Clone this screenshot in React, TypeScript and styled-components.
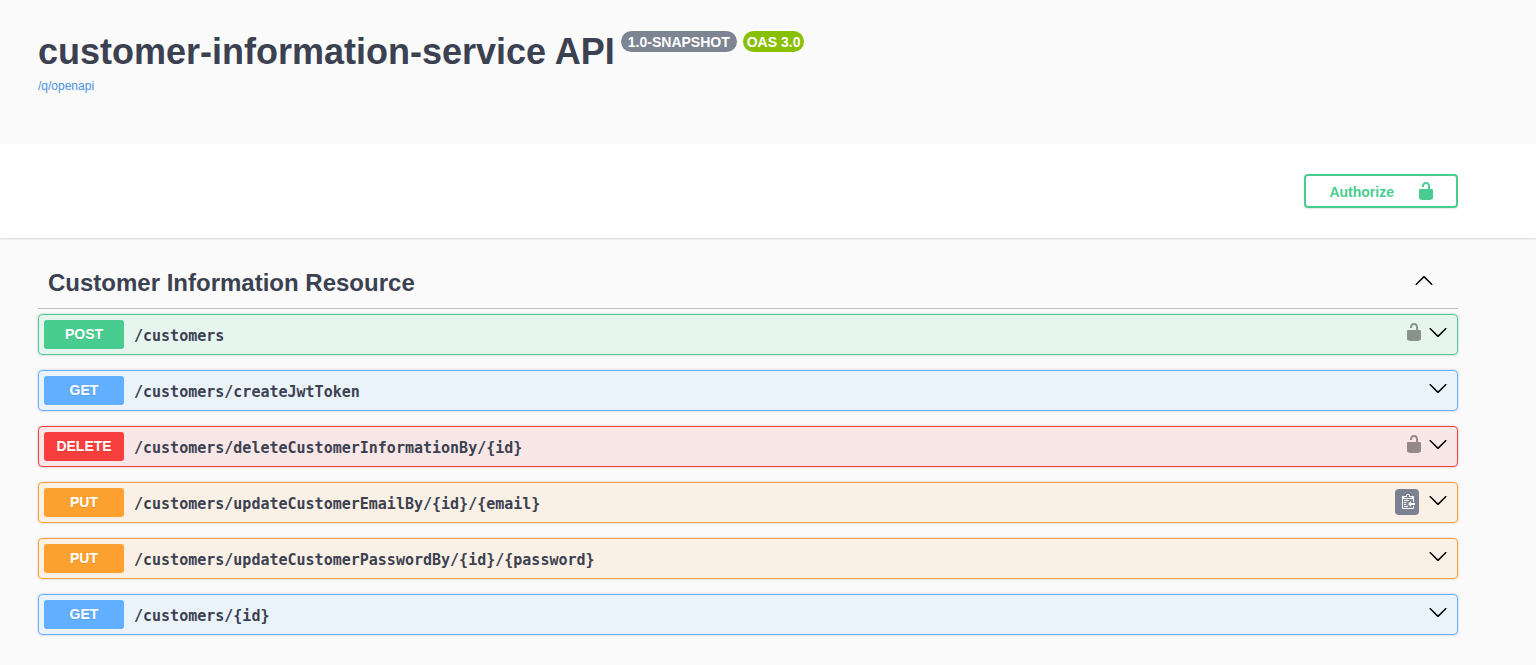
import React from "react";
import styled, { createGlobalStyle } from "styled-components";

const sans = `"Liberation Sans", Arial, sans-serif`;
const mono = `"DejaVu Sans Mono", Consolas, monospace`;
const ink = "#3b4151";

type Method = "POST" | "GET" | "DELETE" | "PUT";

const palette: Record<Method, { solid: string; tint: string }> = {
  POST: { solid: "#49cc90", tint: "rgba(73, 204, 144, 0.1)" },
  GET: { solid: "#61affe", tint: "rgba(97, 175, 254, 0.1)" },
  DELETE: { solid: "#f93e3e", tint: "rgba(249, 62, 62, 0.1)" },
  PUT: { solid: "#fca130", tint: "rgba(252, 161, 48, 0.1)" },
};

interface Operation {
  method: Method;
  path: string;
  secured?: boolean;
  copyable?: boolean;
}

const operations: Operation[] = [
  { method: "POST", path: "/customers", secured: true },
  { method: "GET", path: "/customers/createJwtToken" },
  { method: "DELETE", path: "/customers/deleteCustomerInformationBy/{id}", secured: true },
  { method: "PUT", path: "/customers/updateCustomerEmailBy/{id}/{email}", copyable: true },
  { method: "PUT", path: "/customers/updateCustomerPasswordBy/{id}/{password}" },
  { method: "GET", path: "/customers/{id}" },
];

const GlobalStyle = createGlobalStyle`
  *, *::before, *::after { box-sizing: border-box; }
  body {
    margin: 0;
    background: #fafafa;
    color: ${ink};
    font-family: ${sans};
  }
  button {
    margin: 0;
    padding: 0;
    border: 0;
    background: none;
    color: inherit;
    font-family: inherit;
    cursor: pointer;
  }
  svg { display: block; }
`;

const Page = styled.div`
  min-height: 100vh;
`;

const Band = styled.div`
  padding-right: 40px;
`;

const Wrapper = styled.div`
  max-width: 1460px;
  margin: 0 auto;
  padding: 0 20px;
`;

const Info = styled.header`
  padding: 30px 0 50px;
`;

const TitleRow = styled.div`
  display: flex;
  align-items: flex-start;
  gap: 6px;
`;

const Title = styled.h1`
  margin: 0;
  font-size: 36px;
  line-height: 44px;
  font-weight: 700;
`;

const VersionBadge = styled.span<{ $color: string; $inset: number }>`
  margin-top: 1px;
  padding: 1px ${(p) => p.$inset}px 0;
  border-radius: 57px;
  background: ${(p) => p.$color};
  color: #fff;
  font-size: 14px;
  line-height: 20px;
  font-weight: 700;
`;

const SpecLink = styled.a`
  display: inline-block;
  margin-top: 4px;
  color: #4990e2;
  font-size: 12px;
  line-height: 16px;
  text-decoration: none;
`;

const SchemeBand = styled(Band)`
  padding-top: 30px;
  padding-bottom: 30px;
  background: #fff;
  box-shadow: 0 1px 2px rgba(0, 0, 0, 0.15);
`;

const SchemeRow = styled.div`
  display: flex;
  justify-content: flex-end;
`;

const AuthorizeButton = styled.button`
  display: flex;
  align-items: center;
  gap: 22px;
  padding: 5px 20px 5px 23px;
  border: 2px solid #49cc90;
  border-radius: 4px;
  box-shadow: 0 1px 2px rgba(0, 0, 0, 0.1);
  color: #49cc90;
  font-size: 14px;
  line-height: 20px;
  font-weight: 700;
`;

const AuthorizeLabel = styled.span`
  padding-top: 2px;
  line-height: 18px;
`;

const TagSection = styled.section`
  padding: 19px 0 30px;
`;

const TagHeader = styled.div`
  display: flex;
  align-items: flex-start;
  justify-content: space-between;
  margin-bottom: 5px;
  padding: 10px 24px 10px 10px;
  border-bottom: 1px solid rgba(59, 65, 81, 0.3);
`;

const TagTitle = styled.h2`
  margin: 0;
  font-size: 24px;
  line-height: 31px;
  font-weight: 700;
`;

const OperationList = styled.div`
  display: flex;
  flex-direction: column;
  gap: 15px;
`;

const OperationRow = styled.div<{ $method: Method }>`
  display: flex;
  align-items: flex-start;
  padding: 5px 9px 5px 5px;
  border: 1px solid ${(p) => palette[p.$method].solid};
  border-radius: 4px;
  background: ${(p) => palette[p.$method].tint};
  box-shadow: 0 0 3px rgba(0, 0, 0, 0.19);
`;

const Summary = styled.button`
  display: flex;
  flex: 1;
  align-items: center;
  gap: 10px;
  min-width: 0;
  text-align: left;
`;

const MethodBadge = styled.span<{ $method: Method }>`
  width: 80px;
  border-radius: 3px;
  background: ${(p) => palette[p.$method].solid};
  color: #fff;
  font-size: 14px;
  line-height: 29px;
  font-weight: 700;
  text-align: center;
  text-shadow: 0 1px 0 rgba(0, 0, 0, 0.1);
`;

const Path = styled.span`
  padding-top: 2px;
  font-family: ${mono};
  font-size: 15px;
  line-height: 20px;
  font-weight: 700;
  overflow-wrap: anywhere;
`;

const Actions = styled.div`
  display: flex;
  align-items: flex-start;
  gap: 4px;
  padding-top: 2px;
`;

const LockButton = styled.button`
  color: #000;
  opacity: 0.4;
`;

const ArrowButton = styled.button`
  color: #000;
`;

const TagToggle = styled(ArrowButton)`
  padding-top: 3px;
`;

const CopyButton = styled.button`
  display: flex;
  align-items: center;
  justify-content: center;
  width: 24px;
  height: 26px;
  margin: 1px 9px 0 0;
  border-radius: 4px;
  background: #7d8293;
`;

const UnlockedIcon = () => (
  <svg width="20" height="20" viewBox="0 0 20 20" fill="currentColor" aria-hidden="true">
    <path d="M15.8 8H14V5.6C14 2.703 12.665 1 10 1 7.334 1 6 2.703 6 5.6V6h2v-.801C8 3.754 8.797 3 10 3c1.203 0 2 .754 2 2.199V8H4c-.553 0-1 .646-1 1.199V17c0 .549.428 1.139.951 1.307l1.197.387C5.672 18.861 6.55 19 7.1 19h5.8c.549 0 1.428-.139 1.951-.307l1.196-.387c.524-.167.953-.757.953-1.306V9.199C17 8.646 16.352 8 15.8 8z" />
  </svg>
);

const ArrowDownIcon = () => (
  <svg width="20" height="20" viewBox="0 0 20 20" fill="currentColor" aria-hidden="true">
    <path d="M17.418 6.109c.272-.268.709-.268.979 0s.271.701 0 .969l-7.908 7.83c-.27.268-.707.268-.979 0l-7.908-7.83c-.27-.268-.27-.701 0-.969s.709-.268.979 0L10 13.25z" />
  </svg>
);

const ArrowUpIcon = () => (
  <svg width="20" height="20" viewBox="0 0 20 20" fill="currentColor" aria-hidden="true">
    <path d="M17.418 14.908c.272.268.709.268.979 0s.271-.701 0-.969l-7.908-7.83c-.27-.268-.707-.268-.979 0l-7.908 7.83c-.27.268-.27.701 0 .969s.709.268.979 0L10 7.767z" />
  </svg>
);

const ClipboardIcon = () => (
  <svg width="15" height="16" viewBox="0 0 15 16" fill="#fff" aria-hidden="true">
    <path
      transform="translate(2 -1)"
      fillRule="evenodd"
      d="M2 13h4v1H2v-1zm5-6H2v1h5V7zm2 3V8l-3 3 3 3v-2h5v-2H9zM4.5 9H2v1h2.5V9zM2 12h2.5v-1H2v1zm9 1h1v2c-.02.28-.11.52-.3.7-.19.18-.42.28-.7.3H1c-.55 0-1-.45-1-1V4c0-.55.45-1 1-1h3c0-1.11.89-2 2-2 1.11 0 2 .89 2 2h3c.55 0 1 .45 1 1v5h-1V6H1v9h10v-2zM2 5h8c0-.55-.45-1-1-1H8c-.55 0-1-.45-1-1s-.45-1-1-1-1 .45-1 1-.45 1-1 1H3c-.55 0-1 .45-1 1z"
    />
  </svg>
);

function OperationItem({ method, path, secured, copyable }: Operation) {
  return (
    <OperationRow $method={method}>
      <Summary type="button">
        <MethodBadge $method={method}>{method}</MethodBadge>
        <Path>{path}</Path>
      </Summary>
      {copyable && (
        <CopyButton type="button" aria-label="Copy to clipboard">
          <ClipboardIcon />
        </CopyButton>
      )}
      <Actions>
        {secured && (
          <LockButton type="button" aria-label="Authorization button unlocked">
            <UnlockedIcon />
          </LockButton>
        )}
        <ArrowButton type="button" aria-label="Expand operation">
          <ArrowDownIcon />
        </ArrowButton>
      </Actions>
    </OperationRow>
  );
}

export default function App() {
  return (
    <Page>
      <GlobalStyle />
      <Band>
        <Wrapper>
          <Info>
            <TitleRow>
              <Title>customer-information-service API</Title>
              <VersionBadge $color="#7d8492" $inset={7}>1.0-SNAPSHOT</VersionBadge>
              <VersionBadge $color="#89bf04" $inset={4}>OAS 3.0</VersionBadge>
            </TitleRow>
            <SpecLink href="/q/openapi">/q/openapi</SpecLink>
          </Info>
        </Wrapper>
      </Band>
      <SchemeBand>
        <Wrapper>
          <SchemeRow>
            <AuthorizeButton type="button">
              <AuthorizeLabel>Authorize</AuthorizeLabel>
              <UnlockedIcon />
            </AuthorizeButton>
          </SchemeRow>
        </Wrapper>
      </SchemeBand>
      <Band>
        <Wrapper>
          <TagSection>
            <TagHeader>
              <TagTitle>Customer Information Resource</TagTitle>
              <TagToggle type="button" aria-label="Collapse section">
                <ArrowUpIcon />
              </TagToggle>
            </TagHeader>
            <OperationList>
              {operations.map((op) => (
                <OperationItem key={op.method + op.path} {...op} />
              ))}
            </OperationList>
          </TagSection>
        </Wrapper>
      </Band>
    </Page>
  );
}
